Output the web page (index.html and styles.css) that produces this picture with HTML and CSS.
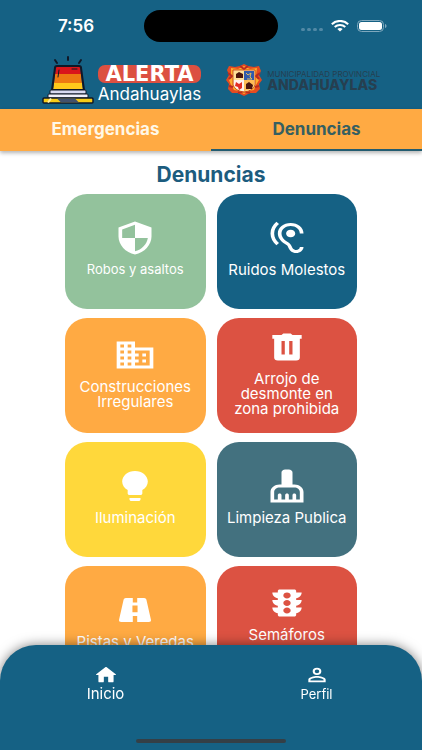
FILE: index.html
```html
<!DOCTYPE html>
<html lang="es">
<head>
<meta charset="utf-8">
<meta name="viewport" content="width=device-width, initial-scale=1">
<title>Alerta Andahuaylas</title>
<link rel="stylesheet" href="styles.css">
</head>
<body>
<div class="app">
  <header class="header">
    <div class="status">
      <time class="status-time">7:56</time>
      <div class="island"></div>
      <div class="status-icons">
        <svg width="22" height="4" viewBox="0 0 22 4" fill="#5289a6"><rect x="0" y="0" width="4" height="3" rx="1.5"/><rect x="6" y="0" width="4" height="3" rx="1.5"/><rect x="12" y="0" width="4" height="3" rx="1.5"/><rect x="18" y="0" width="4" height="3" rx="1.5"/></svg>
        <svg width="18" height="12" viewBox="0 0 18 12" fill="none" stroke="#fff" stroke-width="2"><path d="M.8 4.2C5.300-.2 12.700-.2 17.200 4.200"/><path d="M3.700 7.100c3-2.800 7.600-2.800 10.600 0"/><path d="M6.300 8.900c1.600-1.300 3.800-1.300 5.400 0L9 11.600z" fill="#fff" stroke="none"/></svg>
        <svg width="30" height="12" viewBox="0 0 30 12"><rect x=".5" y=".5" width="26" height="11" rx="4" fill="none" stroke="#7fa8bd"/><rect x="2" y="2" width="23" height="8" rx="2.500" fill="#fff"/><path d="M28 4c2 .5 2 3.500 0 4z" fill="#7fa8bd"/></svg>
      </div>
    </div>
    <div class="brands">
      <div class="brand">
        <svg class="siren" width="52" height="50" viewBox="0 0 52 50">
          <g stroke="#101827" stroke-width="2" stroke-linecap="round"><path d="M26 2v3M13 5l2 3M39 5l-2 3"/></g>
          <path d="M14 11h24l1 8H13z" fill="#d9151b"/><path d="M13 19h26l1 9H12z" fill="#ed7912"/><path d="M12 28h28l1 7H11z" fill="#ffc91b"/>
          <path d="M15 11h22q2 0 2 2l3 22H10l3-22q0-2 2-2z" fill="none" stroke="#101827" stroke-width="2"/>
          <path d="M17 15l-1 7M30 14h5" stroke="#101827" stroke-width="1" stroke-linecap="round"/>
          <rect x="8" y="35" width="36" height="4" rx="1" fill="#d9daf2" stroke="#101827"/>
          <rect x="6" y="39" width="40" height="4" rx="1" fill="#f1f0fb" stroke="#101827"/>
          <rect x="1" y="43" width="50" height="5" rx="1" fill="#f7cc18" stroke="#101827" stroke-width="1.500"/>
          <path d="M15 43.500h18l4 4H19z" fill="#42516d"/><path d="M9 43.500l-3 4" stroke="#fff1a5" stroke-width="2"/>
        </svg>
        <div class="brand-name"><strong>ALERTA</strong><span>Andahuaylas</span></div>
      </div>
      <div class="brand">
        <svg class="crest" width="38" height="32" viewBox="0 0 38 32">
          <path d="M4 2l6 1 5-1 4-2 4 2 6 1 5-1 2 5-2 4 3 5-3 4 1 5-4 4-6 0-6 3-6-3-6 0-4-4 1-5-3-4 3-5-2-5z" fill="#e44b20"/>
          <path d="M6 4l7 1 6-3 6 3 7-1-1 7 3 5-3 5-2 5-5 1-5 3-5-3-5-1-3-5-2-5 2-5z" fill="#ffae2b"/>
          <path d="M3 9l4 3-3 3M35 9l-4 3 3 3M4 22l4 1M34 22l-4 1M15 2l4 3 4-3M13 29l6-2 6 2" fill="none" stroke="#b92a22" stroke-width="2"/>
          <path d="M8 6h22v15q-2 6-11 7-9-1-11-7z" fill="#fff1b0" stroke="#cb4a1b"/>
          <path d="M9 7h10v9H9z" fill="#ffe09a"/><path d="M19 7h10v9H19z" fill="#315bad"/><path d="M9 16h10v11q-8-1-10-6z" fill="#fff3ec"/><path d="M19 16h10v5q-2 5-10 6z" fill="#ffbd55"/>
          <path d="M11 14v-4l3-2 4 2v4zM21 25v-5l3-2 4 3-1 4z" fill="#4b160d"/><path d="M11 18l3 2 3-2v6l-3 2-1-3-3-1z" fill="#e32d23"/><path d="M21 9l2 2 3-2-1 4 2 2h-5" stroke="#e1bd62" fill="none"/>
        </svg>
        <div class="city-name"><span>MUNICIPALIDAD PROVINCIAL</span><strong>ANDAHUAYLAS</strong></div>
      </div>
    </div>
  </header>

  <nav class="tabs" aria-label="Secciones">
    <a href="#emergencias" class="tab">Emergencias</a>
    <a href="#denuncias" class="tab tab-active" aria-current="page">Denuncias</a>
  </nav>

  <main class="content" id="denuncias">
    <h1>Denuncias</h1>
    <div class="grid">
      <button class="card green"><svg class="icon" viewBox="0 0 24 24" preserveAspectRatio="none"><path fill-rule="evenodd" d="M12 1L3 5v6c0 5.550 3.840 10.740 9 12 5.160-1.260 9-6.450 9-12V5zM12 3.200V12H5V6.300zM12 12h7c-.5 4.100-3.300 7.800-7 8.900z"/></svg><span class="label label-small">Robos y asaltos</span></button>
      <button class="card blue"><svg class="icon" viewBox="0 0 24 24" preserveAspectRatio="none"><path d="M17 20c-.29 0-.56-.06-.76-.15-.71-.37-1.21-.88-1.71-2.38-.51-1.56-1.47-2.29-2.39-3-.79-.61-1.61-1.24-2.32-2.53C9.290 10.980 9 9.930 9 9c0-2.800 2.200-5 5-5s5 2.200 5 5h2c0-3.930-3.070-7-7-7S7 5.070 7 9c0 1.260.38 2.650 1.070 3.900.91 1.650 1.980 2.480 2.850 3.150.81.62 1.390 1.070 1.710 2.050.6 1.820 1.370 2.840 2.730 3.550.51.23 1.070.35 1.640.35 2.210 0 4-1.790 4-4h-2c0 1.100-.9 2-2 2zM7.640 2.640L6.220 1.220C4.230 3.210 3 5.960 3 9s1.230 5.790 3.220 7.780l1.410-1.410C6.010 13.740 5 11.490 5 9s1.010-4.740 2.640-6.360zM11.500 9c0 1.380 1.120 2.500 2.500 2.500s2.500-1.120 2.500-2.500-1.120-2.500-2.500-2.500-2.500 1.120-2.500 2.500z"/></svg><span class="label">Ruidos Molestos</span></button>
      <button class="card orange"><svg class="icon" viewBox="0 0 24 24" preserveAspectRatio="none"><path d="M12 7V3H2v18h20V7H12zM6 19H4v-2h2v2zm0-4H4v-2h2v2zm0-4H4V9h2v2zm0-4H4V5h2v2zm4 12H8v-2h2v2zm0-4H8v-2h2v2zm0-4H8V9h2v2zm0-4H8V5h2v2zm10 12h-8v-2h2v-2h-2v-2h2v-2h-2V9h8v10zm-2-8h-2v2h2v-2zm0 4h-2v2h2v-2z"/></svg><span class="label">Construcciones Irregulares</span></button>
      <button class="card red"><svg class="icon" viewBox="0 0 24 24" preserveAspectRatio="none"><path fill-rule="evenodd" d="M4 4h5l1-1h4l1 1h5v2.500h-1V19q0 2-2 2H7q-2 0-2-2V6.500H4zM9 8v9h1.800V8zM13.200 8v9H15V8z"/></svg><span class="label">Arrojo de desmonte en zona prohibida</span></button>
      <button class="card yellow"><svg class="icon" viewBox="0 0 24 24" preserveAspectRatio="none"><path d="M9 21c0 .55.45 1 1 1h4c.55 0 1-.45 1-1v-1H9v1zm3-19C8.140 2 5 5.140 5 9c0 2.380 1.190 4.470 3 5.740V17c0 .55.45 1 1 1h6c.55 0 1-.45 1-1v-2.260c1.810-1.270 3-3.360 3-5.740 0-3.860-3.140-7-7-7z"/></svg><span class="label">Iluminación</span></button>
      <button class="card slate"><svg class="icon" viewBox="0 0 24 24" preserveAspectRatio="none"><path d="M16 11h-1V3c0-1.100-.9-2-2-2h-2c-1.100 0-2 .9-2 2v8H8c-2.760 0-5 2.240-5 5v7h18v-7c0-2.760-2.240-5-5-5zm3 10h-2v-3c0-.55-.45-1-1-1s-1 .45-1 1v3h-2v-3c0-.55-.45-1-1-1s-1 .45-1 1v3H9v-3c0-.55-.45-1-1-1s-1 .45-1 1v3H5v-5c0-1.650 1.350-3 3-3h8c1.650 0 3 1.350 3 3v5z"/></svg><span class="label">Limpieza Publica</span></button>
      <button class="card orange"><svg class="icon" viewBox="0 0 24 24" preserveAspectRatio="none"><path fill-rule="evenodd" d="M7 4h3.800v3h2.400V4H17q1 0 1.200 1l2.500 13.500q.2 1.500-1.200 1.500h-6.300v-4h-2.400v4H4.500q-1.400 0-1.200-1.500L5.800 5Q6 4 7 4zm3.600 5v4.500h2.800V9z"/></svg><span class="label">Pistas y Veredas</span></button>
      <button class="card red"><svg class="icon" viewBox="0 0 24 24" preserveAspectRatio="none"><path d="M20 10h-3V8.860c1.720-.45 3-2 3-3.860h-3V4c0-.55-.45-1-1-1H8c-.55 0-1 .45-1 1v1H4c0 1.860 1.280 3.410 3 3.860V10H4c0 1.860 1.280 3.410 3 3.860V15H4c0 1.860 1.280 3.410 3 3.860V20c0 .55.45 1 1 1h8c.55 0 1-.45 1-1v-1.140c1.720-.45 3-2 3-3.860h-3v-1.140c1.720-.45 3-2 3-3.860zm-8 9c-1.110 0-2-.9-2-2s.89-2 2-2c1.100 0 2 .9 2 2s-.89 2-2 2zm0-5c-1.110 0-2-.9-2-2s.89-2 2-2c1.100 0 2 .9 2 2s-.89 2-2 2zm0-5c-1.110 0-2-.9-2-2 0-1.110.89-2 2-2 1.100 0 2 .89 2 2 0 1.100-.89 2-2 2z"/></svg><span class="label label-double">Semáforos</span></button>
    </div>
  </main>

  <nav class="bottom" aria-label="Principal">
    <div class="bottom-links">
      <a href="#inicio"><svg class="nav-icon" viewBox="0 0 24 24" preserveAspectRatio="none"><path d="M10 19v-5h4v5c0 .55.45 1 1 1h3c.55 0 1-.45 1-1v-7h1.700c.46 0 .68-.57.33-.87L12.670 3.600c-.38-.34-.96-.34-1.340 0l-8.360 7.530c-.34.3-.13.870.33.870H5v7c0 .55.45 1 1 1h3c.55 0 1-.45 1-1z"/></svg><span>Inicio</span></a>
      <a href="#perfil"><svg class="nav-icon" viewBox="0 0 24 24" preserveAspectRatio="none"><path fill-rule="evenodd" d="M12 4a4 4 0 1 0 0 8 4 4 0 0 0 0-8zm0 1.900a2.100 2.100 0 1 1 0 4.200 2.100 2.100 0 0 1 0-4.200zM12 13c-2.670 0-8 1.340-8 4v3h16v-3c0-2.660-5.330-4-8-4zm0 1.900c2.970 0 6.100 1.460 6.100 2.100v1.100H5.900V17c0-.64 3.130-2.100 6.100-2.100z"/></svg><span class="nav-small">Perfil</span></a>
    </div>
    <div class="home-bar"></div>
  </nav>
</div>
</body>
</html>
```
FILE: styles.css
```css
* { box-sizing: border-box; }

body {
  margin: 0;
  background: #fff;
  font-family: Inter, "Liberation Sans", sans-serif;
}

a { color: inherit; text-decoration: none; }

.app {
  display: flex;
  flex-direction: column;
  height: 100vh;
  overflow: hidden;
}

.header { background: #156184; padding-bottom: 4px; }

.status {
  display: grid;
  grid-template-columns: 1fr 134px 1fr;
  align-items: center;
  padding-top: 10px;
}

.status-time {
  padding-left: 8px;
  color: #fff;
  font-size: 17px;
  font-weight: 600;
  line-height: 32px;
  text-align: center;
}

.island { height: 32px; border-radius: 16px; background: #000; }

.status-icons {
  display: flex;
  align-items: center;
  justify-content: flex-end;
  gap: 8px;
  padding-right: 35px;
}

.status-icons svg:first-child { margin-top: 8px; }

.brands {
  display: flex;
  justify-content: center;
  align-items: center;
  gap: 24px;
  padding-top: 13px;
}

.brand { display: flex; align-items: center; gap: 4px; }

.brand-name {
  display: flex;
  flex-direction: column;
  padding-top: 10px;
  color: #fff;
  text-align: center;
}

.brand-name strong {
  border-radius: 7px;
  background: #dc5041;
  font-family: "DejaVu Sans", sans-serif;
  font-size: 21px;
  line-height: 18px;
}

.brand-name span { font-size: 17px; line-height: 22px; }

.city-name { display: flex; flex-direction: column; color: #263f50; }
.city-name span { font-size: 8px; line-height: 10px; }
.city-name strong { font-size: 14px; font-weight: 800; line-height: 12px; }

.tabs {
  position: relative;
  display: flex;
  flex-shrink: 0;
  background: #ffaa43;
  box-shadow: 0 2px 4px rgba(0, 0, 0, 0.3);
}

.tab {
  flex: 1;
  border-bottom: 2px solid transparent;
  color: #fff8e7;
  font-size: 17px;
  font-weight: 700;
  line-height: 40px;
  text-align: center;
}

.tab-active { border-color: #235c70; color: #355f61; }

.content { flex: 1; overflow: hidden; }

h1 {
  margin: 0;
  padding: 8px 0 4px;
  color: #1c5c7e;
  font-size: 21px;
  font-weight: 700;
  line-height: 31px;
  text-align: center;
}

.grid {
  display: grid;
  grid-template-columns: repeat(2, 1fr);
  grid-auto-rows: 115px;
  gap: 9px 11px;
  padding: 0 65px;
}

.card {
  display: flex;
  flex-direction: column;
  align-items: center;
  justify-content: center;
  gap: 6px;
  padding: 0 8px;
  border: 0;
  border-radius: 22px;
  color: #fff;
  font-family: inherit;
}

.green { background: #93c29c; }
.blue { background: #156184; }
.orange { background: #ffaa43; }
.red { background: #dc5242; }
.yellow { background: #ffd83b; }
.slate { background: #43717f; }

.icon {
  flex-shrink: 0;
  width: 44px;
  height: 36px;
  margin-top: -6px;
  fill: #fff;
}

.label { font-size: 15px; line-height: 15px; }
.label-small { font-size: 13px; }
.label-double { min-height: 30px; }

.bottom {
  position: fixed;
  inset: auto 0 0;
  padding: 19px 0 7px;
  border-radius: 36px 36px 0 0;
  background: #156184;
  box-shadow: 0 0 12px rgba(0, 0, 0, 0.5);
  color: #fff;
}

.bottom-links { display: flex; padding-bottom: 37px; }

.bottom-links a {
  display: flex;
  flex: 1;
  flex-direction: column;
  align-items: center;
  font-size: 15px;
  line-height: 16px;
}

.bottom-links .nav-small { font-size: 13px; }

.nav-icon { width: 26px; height: 22px; fill: #fff; }

.home-bar {
  width: 150px;
  height: 4px;
  margin: 0 auto;
  border-radius: 2px;
  background: #343f46;
}
```
